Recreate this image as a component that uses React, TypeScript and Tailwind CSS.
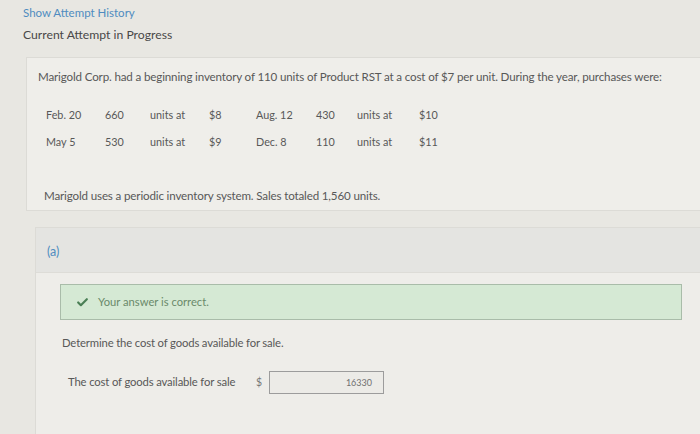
import { Check } from "lucide-react";

const rows = [
  ["Feb. 20", "660", "units at", "$8", "Aug. 12", "430", "units at", "$10"],
  ["May 5", "530", "units at", "$9", "Dec. 8", "110", "units at", "$11"],
];

export default function App() {
  return (
    <div
      className="w-[700px] h-[434px] overflow-hidden bg-[#e8e7e2] text-[#585858]"
      style={{ fontFamily: "Lato, 'Open Sans', sans-serif" }}
    >
      {/* HEADER */}
      <div className="pl-[23px] pt-[6px]">
        <p className="text-[11.5px] leading-[14px] text-[#4f8cc0]">Show Attempt History</p>
        <p className="mt-[7px] text-[12.2px] leading-[16px] text-[#484848]">Current Attempt in Progress</p>
      </div>

      {/* PROBLEM CARD */}
      <div className="ml-[26px] mr-[-10px] mt-[14px] h-[154px] border border-[#dcdbd6] bg-[#efeeea] pl-[11px] pt-[12px]">
        <p className="text-[11.6px] leading-[14px] tracking-[-0.15px]">
          Marigold Corp. had a beginning inventory of 110 units of Product RST at a cost of $7 per unit. During the year, purchases were:
        </p>

        <div className="mt-[24px] pl-[8px] flex flex-col gap-[13px] text-[10.8px] leading-[14px]">
          {rows.map((r, i) => (
            <div key={i} className="flex">
              <span className="w-[59px]">{r[0]}</span>
              <span className="w-[45px]">{r[1]}</span>
              <span className="w-[59px]">{r[2]}</span>
              <span className="w-[47px]">{r[3]}</span>
              <span className="w-[60px]">{r[4]}</span>
              <span className="w-[41px]">{r[5]}</span>
              <span className="w-[62px]">{r[6]}</span>
              <span className="w-[40px]">{r[7]}</span>
            </div>
          ))}
        </div>

        <p className="mt-[40px] pl-[6px] text-[11.6px] leading-[14px] tracking-[-0.15px]">
          Marigold uses a periodic inventory system. Sales totaled 1,560 units.
        </p>
      </div>

      {/* PART (a) */}
      <div className="ml-[35px] mr-[-10px] mt-[16px] border border-[#dcdbd6] bg-[#eeede9] h-[220px]">
        <div className="h-[45px] bg-[#e4e4e1] border-b border-[#dddcd7] flex items-center pl-[11px] pt-[5px]">
          <span className="text-[12.5px] text-[#4f8cc0]">(a)</span>
        </div>

        <div className="pl-[24px] pt-[11px]">
          <div className="w-[622px] h-[36px] border border-[#a9bca9] bg-[#d5e9d4] flex items-center pl-[15px]">
            <Check size={13} strokeWidth={4} className="text-[#4a7f55]" />
            <span className="ml-[9px] text-[11.2px] text-[#6a8a6a]">Your answer is correct.</span>
          </div>

          <p className="mt-[16px] pl-[2px] text-[11.3px] leading-[14px] tracking-[-0.15px]">
            Determine the cost of goods available for sale.
          </p>

          <div className="mt-[21px] pl-[8px] flex items-center">
            <span className="w-[188px] text-[11.3px] tracking-[-0.15px]">The cost of goods available for sale</span>
            <span className="w-[13px] text-[10.5px] text-[#777]">$</span>
            <div className="w-[115px] h-[23px] border border-[#9c9c9c] bg-[#ecebe7] flex items-center justify-end pr-[11px] text-[9px] text-[#707070]">
              16330
            </div>
          </div>
        </div>
      </div>
    </div>
  );
}
